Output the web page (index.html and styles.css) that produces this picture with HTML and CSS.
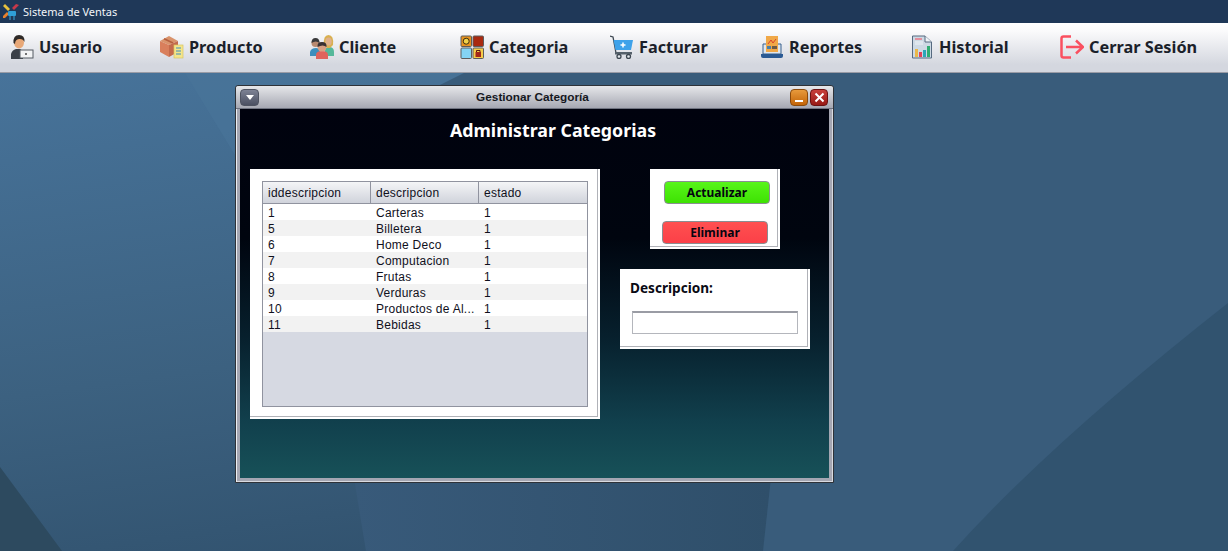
FILE: index.html
```html
<!DOCTYPE html>
<html lang="en">
<head>
<meta charset="UTF-8">
<meta name="viewport" content="width=device-width, initial-scale=1.0">
<title>Sistema de Ventas</title>
<link rel="stylesheet" href="styles.css">
</head>
<body>
    <header class="titlebar">
        <svg class="app-icon" width="16" height="16" viewBox="0 0 16 16">
            <path d="M0 2 L2 0 L7 5 L5 7 Z" fill="#e8c23e"/>
            <path d="M16 1 L13 0 L9 4 L11 6 Z" fill="#c8384a"/>
            <path d="M0 14 L0 12 L4 8 L6 10 L2 14 Z" fill="#e8812c"/>
            <rect x="5" y="7" width="8" height="5" rx="1" fill="#2f9fd8"/>
            <rect x="6" y="12" width="2" height="4" fill="#2b6f9a"/>
            <rect x="10" y="12" width="2" height="4" fill="#2b6f9a"/>
        </svg>
        <span>Sistema de Ventas</span>
    </header>

    <nav class="menu">
        <a class="menu-item">
            <svg width="24" height="24" viewBox="0 0 24 24">
                <path d="M1 24 L1 19 Q2 15 6 14 L10 14 L13 16 L13 24 Z" fill="#3b4048"/>
                <ellipse cx="9" cy="7.500" rx="5" ry="6" fill="#e8a878"/>
                <path d="M3.500 8 Q3 0 9 0 Q15 0 14.500 7 Q13 3.500 9 4 Q5 4.500 5 9 Z" fill="#2e2a28"/>
                <rect x="10" y="15" width="13" height="8" fill="#f2f3f5" stroke="#555b63"/>
                <circle cx="16" cy="19" r="1" fill="#444"/>
            </svg>
            Usuario
        </a>
        <a class="menu-item">
            <svg width="24" height="24" viewBox="0 0 24 24">
                <path d="M0 6 L9 1 L18 6 L9 10 Z" fill="#d9936b"/>
                <path d="M0 6 L9 10 L9 22 L0 17 Z" fill="#d97f5c"/>
                <path d="M9 10 L18 6 L18 17 L9 22 Z" fill="#c46a4b"/>
                <path d="M4 3.700 L13 8" stroke="#b5603f" stroke-width="1.500"/>
                <rect x="14" y="10" width="9" height="13" fill="#f4e58a" stroke="#d8c662" stroke-width=".7"/>
                <path d="M16 13 H21 M16 16 H21 M16 19 H21" stroke="#3f8fbd" stroke-width="1.200"/>
            </svg>
            Producto
        </a>
        <a class="menu-item">
            <svg width="24" height="24" viewBox="0 0 24 24">
                <path d="M15 16 Q15 12 19 12 Q24 12 24 17 L24 21 L15 21 Z" fill="#55b89a"/>
                <path d="M14 10 Q13 0 18.500 0 Q24 0 23 10 L20 13 L17 13 Z" fill="#d9b050"/>
                <ellipse cx="18.500" cy="6.500" rx="3.200" ry="4" fill="#e0b08a"/>
                <path d="M0 21 L0 17 Q1 13 6 13 Q10 13 10 18 L10 21 Z" fill="#3f8fbd"/>
                <circle cx="5.500" cy="8" r="4" fill="#b98a70"/>
                <path d="M1.500 8 Q1.500 3 5.500 3 Q9.500 3 9.500 8 Q6 5 1.500 8 Z" fill="#3a3a3c"/>
                <path d="M6 24 L6 20 Q6 16 12 16 Q18 16 18 20 L18 24 Z" fill="#e0645c"/>
                <circle cx="12" cy="12" r="4.500" fill="#d8a082"/>
                <path d="M7.500 12 Q7 7 12 7 Q17 7 16.500 12 Q13 9 7.500 12 Z" fill="#3a3234"/>
            </svg>
            Cliente
        </a>
        <a class="menu-item">
            <svg width="24" height="24" viewBox="0 0 24 24">
                <rect x="1" y="1" width="10.500" height="10.500" rx="1" fill="#e8931e" stroke="#5c5c5c"/>
                <circle cx="6.200" cy="6.200" r="3" fill="#f2d24a" stroke="#3a2c10"/>
                <rect x="13" y="1" width="10.500" height="10.500" rx="1" fill="#a92a10" stroke="#5c5c5c"/>
                <rect x="1" y="13" width="10.500" height="10.500" rx="1" fill="#84d4f5" stroke="#5c5c5c"/>
                <rect x="13" y="13" width="10.500" height="10.500" rx="1" fill="#f5cc4a" stroke="#5c5c5c"/>
                <rect x="15.500" y="17" width="5.500" height="5" fill="#a3261a"/>
                <path d="M16.500 17 V15.500 H20 V17" fill="none" stroke="#5a1a10"/>
            </svg>
            Categoria
        </a>
        <a class="menu-item">
            <svg width="24" height="24" viewBox="0 0 24 24">
                <path d="M0 1 L3 2 L6 18" fill="none" stroke="#3c4650" stroke-width="1.300"/>
                <path d="M3.500 5 H23 L21 15 H5.500 Z" fill="#3ea2ea"/>
                <rect x="5" y="17" width="17" height="2.500" fill="#55606a"/>
                <circle cx="9" cy="21.500" r="2" fill="#e4e8ec" stroke="#3c4650" stroke-width="1.300"/>
                <circle cx="18.500" cy="21.500" r="2" fill="#e4e8ec" stroke="#3c4650" stroke-width="1.300"/>
                <path d="M13 7.500 V12.500 M10.500 10 H15.500" stroke="#fff" stroke-width="1.500"/>
            </svg>
            Facturar
        </a>
        <a class="menu-item">
            <svg width="24" height="24" viewBox="0 0 24 24">
                <path d="M3 9 H21 V19 H3 Z" fill="#dfe6ee" stroke="#36618f"/>
                <rect x="6" y="1" width="12" height="16" fill="#f0a848"/>
                <path d="M8 9 L11 5 L13 8 L16 4" fill="none" stroke="#d8432e"/>
                <rect x="7" y="11" width="4" height="3" fill="#4a7fa8"/>
                <rect x="12" y="11" width="5" height="3" fill="#6a5a48"/>
                <path d="M1 19 H23 V21 Q23 23 21 23 H3 Q1 23 1 21 Z" fill="#2a5a94"/>
            </svg>
            Reportes
        </a>
        <a class="menu-item">
            <svg width="24" height="24" viewBox="0 0 24 24">
                <path d="M2.500 1 H15 L21.500 7 V23 H2.500 Z" fill="#cdd9e4" stroke="#566a80"/>
                <path d="M15 1 V7 H21.500" fill="#eef3f7" stroke="#566a80"/>
                <path d="M5 4 H12" stroke="#ee6a78" stroke-width="1.300"/>
                <path d="M5 7 H13 M5 9 H13" stroke="#eef3f7"/>
                <rect x="5" y="14" width="3" height="8" fill="#eab84a"/>
                <rect x="9" y="17" width="3" height="5" fill="#e0435a"/>
                <rect x="13" y="15" width="3" height="7" fill="#2ca6b8"/>
                <rect x="17" y="11" width="3" height="11" fill="#2eae72"/>
            </svg>
            Historial
        </a>
        <a class="menu-item">
            <svg width="24" height="24" viewBox="0 0 24 24">
                <path d="M11 1.500 H3.500 Q1.500 1.500 1.500 3.500 V20.500 Q1.500 22.500 3.500 22.500 H11" fill="none" stroke="#fa5060" stroke-width="2.500"/>
                <path d="M6 12 H23 M16 5.500 L23 12 L16 18.500" fill="none" stroke="#fa5060" stroke-width="2.500"/>
            </svg>
            Cerrar Sesión
        </a>
    </nav>

    <main class="desktop">
        <svg class="wallpaper" width="1228" height="478" viewBox="0 0 1228 478">
            <defs>
                <linearGradient id="band" x1="0" x2="1" y1="0" y2="0">
                    <stop offset="0" stop-color="#385a7a"/>
                    <stop offset="1" stop-color="#2f4f6a"/>
                </linearGradient>
            </defs>
            <path d="M185 0 H464 L440 12 H235 V82 Z" fill="#4a749a" opacity=".6"/>
            <path d="M0 394 L62 478 H0 Z" fill="#2d4a5f"/>
            <path d="M354 405 L366 478 H763 L771 405 Z" fill="url(#band)"/>
            <path d="M464 0 H1228 V478 H763 L771 405 H800 V12 H440 Z" fill="#395c7b"/>
            <path d="M1228 230 V478 H953 Q1050 370 1228 230 Z" fill="#31536f"/>
        </svg>

        <section class="window">
            <div class="window-head">
                <button class="win-btn win-menu"><span class="arrow"></span></button>
                <h2>Gestionar Categoría</h2>
                <button class="win-btn win-min"><span class="dash"></span></button>
                <button class="win-btn win-close">
                    <svg width="11" height="11" viewBox="0 0 11 11"><path d="M1.500 1.500 L9.500 9.500 M9.500 1.500 L1.500 9.500" stroke="#fff" stroke-width="2"/></svg>
                </button>
            </div>
            <div class="window-body">
                <h1>Administrar Categorias</h1>
                <div class="panels">
                    <div class="panel table-panel">
                        <div class="table-box">
                            <table>
                                <thead>
                                    <tr><th>iddescripcion</th><th>descripcion</th><th>estado</th></tr>
                                </thead>
                                <tbody>
                                    <tr><td>1</td><td>Carteras</td><td>1</td></tr>
                                    <tr><td>5</td><td>Billetera</td><td>1</td></tr>
                                    <tr><td>6</td><td>Home Deco</td><td>1</td></tr>
                                    <tr><td>7</td><td>Computacion</td><td>1</td></tr>
                                    <tr><td>8</td><td>Frutas</td><td>1</td></tr>
                                    <tr><td>9</td><td>Verduras</td><td>1</td></tr>
                                    <tr><td>10</td><td>Productos de Al...</td><td>1</td></tr>
                                    <tr><td>11</td><td>Bebidas</td><td>1</td></tr>
                                </tbody>
                            </table>
                        </div>
                    </div>
                    <div class="side">
                        <div class="panel button-panel">
                            <button class="action green">Actualizar</button>
                            <button class="action red">Eliminar</button>
                        </div>
                        <div class="panel form-panel">
                            <label for="descripcion">Descripcion:</label>
                            <input type="text" id="descripcion">
                        </div>
                    </div>
                </div>
            </div>
        </section>
    </main>
</body>
</html>
```

FILE: styles.css
```css
* {
    box-sizing: border-box;
}
html, body {
    height: 100%;
}
body {
    margin: 0;
    overflow: hidden;
    display: flex;
    flex-direction: column;
    font-family: "Liberation Sans", Arial, sans-serif;
}

/* top bars */
.titlebar {
    height: 23px;
    flex: none;
    display: flex;
    align-items: center;
    gap: 4px;
    padding-left: 3px;
    background-color: #1f3858;
    color: #f2f5f8;
    font-family: "Noto Sans", sans-serif;
    font-size: 11px;
}
.menu {
    height: 50px;
    flex: none;
    display: flex;
    padding: 0 0 2px 10px;
    background: linear-gradient(#ffffff, #fbfbfc 15%, #d4d7df 85%, #d4d7df);
    border-bottom: 1px solid #9a9ca6;
}
.menu-item {
    width: 150px;
    flex: none;
    display: flex;
    align-items: center;
    gap: 5px;
    color: #1b1f2a;
    font-family: "Noto Sans", sans-serif;
    font-weight: bold;
    font-size: 16.3px;
    white-space: nowrap;
}

/* desktop and inner window */
.desktop {
    flex: 1;
    position: relative;
    background: linear-gradient(172deg, #47739a, #3c6180 50%, #2c4b66);
}
.wallpaper {
    position: absolute;
    left: 0;
    top: 0;
}
.window {
    position: absolute;
    left: 235px;
    top: 12px;
    width: 599px;
    height: 398px;
    display: flex;
    flex-direction: column;
    padding: 0 4px 4px;
    border: 1px solid #2e3238;
    border-radius: 3px 3px 0 0;
    background-color: #a4a6b2;
    box-shadow: inset 1px 0 0 #eceef2, inset -1px -1px 0 #d8dae0;
}
.window-head {
    height: 23px;
    flex: none;
    margin: 0 -4px;
    padding: 0 5px 0 4px;
    display: flex;
    align-items: center;
    gap: 2px;
    background: linear-gradient(#e6e7ea, #a6a8b3);
    border-bottom: 1px solid #6f7380;
    border-radius: 3px 3px 0 0;
}
.window-head h2 {
    flex: 1;
    margin: 0;
    padding-left: 16px;
    text-align: center;
    font-size: 11.8px;
    color: #15181e;
}
.win-btn {
    width: 18px;
    height: 17px;
    padding: 0;
    display: flex;
    align-items: center;
    justify-content: center;
    border-radius: 4px;
}
.win-menu {
    width: 19px;
    border: 1px solid #4f5462;
    background: linear-gradient(#7d8294, #4b5062);
}
.win-min {
    border: 1px solid #8a4a0c;
    background: linear-gradient(#e89a3c, #c26408);
}
.win-close {
    border: 1px solid #6b1212;
    background: linear-gradient(#c8403a, #981a16);
}
.arrow {
    width: 0;
    height: 0;
    border-left: 4px solid transparent;
    border-right: 4px solid transparent;
    border-top: 5px solid #fff;
}
.dash {
    width: 8px;
    height: 2px;
    margin-top: 7px;
    background-color: #fff;
}
.window-body {
    flex: 1;
    background: linear-gradient(#00020e, #00050f 35%, #07202d 62%, #11404d 85%, #175158);
}
.window-body h1 {
    margin: 0;
    padding: 8px 0 0 37px;
    height: 60px;
    text-align: center;
    color: #fff;
    font-family: "Noto Sans", sans-serif;
    font-size: 17.8px;
    line-height: 26px;
}

/* panels */
.panels {
    display: flex;
    align-items: flex-start;
    padding-left: 10px;
}
.panel {
    background-color: #fff;
    border-right: 2px solid #fff;
    border-bottom: 2px solid #fff;
    box-shadow: inset -1px -1px 0 #b0b2b8;
}
.table-panel {
    width: 350px;
    height: 250px;
    padding: 12px 0 0 12px;
}
.table-box {
    width: 326px;
    height: 226px;
    background-color: #d6d9e2;
    border: 1px solid #90939f;
}
table {
    width: 100%;
    border-spacing: 0;
    table-layout: fixed;
    font-size: 12px;
    letter-spacing: .25px;
    color: #10101c;
}
th {
    height: 22px;
    padding: 0 0 0 5px;
    text-align: left;
    font-weight: normal;
    background: linear-gradient(#f4f5f7, #d0d3db);
    border-right: 1px solid #90939f;
    border-bottom: 1px solid #90939f;
}
th:last-child {
    border-right: 0;
}
td {
    height: 16px;
    padding: 1px 0 0 5px;
    white-space: nowrap;
    overflow: hidden;
    background-color: #fff;
}
tr:nth-child(even) td {
    background-color: #f2f2f2;
}
.side {
    display: flex;
    flex-direction: column;
    align-items: flex-start;
    gap: 20px;
    margin-left: 20px;
}
.button-panel {
    width: 130px;
    height: 80px;
    margin-left: 30px;
    padding: 12px 0 0 12px;
}
.action {
    display: block;
    width: 106px;
    height: 23px;
    padding: 0;
    border: 1px solid #8a8e92;
    border-radius: 4px;
    color: #050510;
    font-family: "Noto Sans", sans-serif;
    font-size: 12px;
    font-weight: bold;
}
.green {
    margin-left: 2px;
    background: linear-gradient(#58f51a, #3ee203);
}
.red {
    margin-top: 17px;
    background: linear-gradient(#ff5050, #fb4048);
}
.form-panel {
    width: 190px;
    height: 80px;
    padding: 9px 0 0 10px;
}
.form-panel label {
    display: block;
    height: 32px;
    color: #0a0a14;
    font-family: "Noto Sans", sans-serif;
    font-size: 13.6px;
    font-weight: bold;
    line-height: 20px;
}
.form-panel input {
    display: block;
    width: 166px;
    height: 23px;
    margin: 1px 0 0 2px;
    padding: 0 4px;
    border: 1px solid #b4b6bc;
    border-top: 2px solid #9a9ca4;
    background-color: #fff;
}
```
